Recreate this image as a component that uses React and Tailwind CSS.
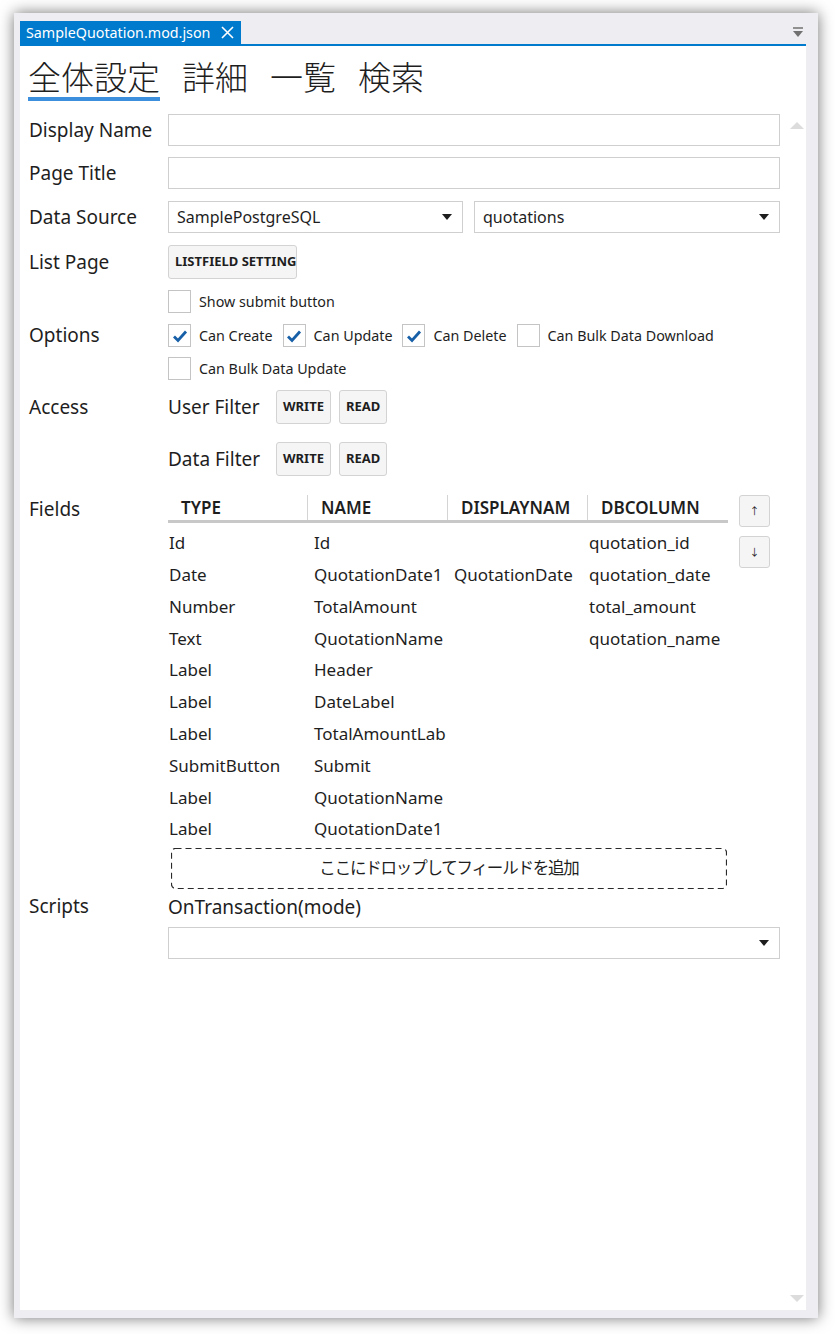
import React from 'react';

const FONT = { fontFamily: '"Noto Sans", "Noto Sans CJK JP", sans-serif' };

const Check = ({ checked, label }) => (
  <div className="flex items-center h-[23px]">
    <div className="w-[23px] h-[23px] border border-[#c4c4c4] bg-white flex items-center justify-center">
      {checked && (
        <svg width="16" height="14" viewBox="0 0 16 14">
          <path d="M2 7.5 L6 11.5 L14 2.5" fill="none" stroke="#1760a8" strokeWidth="2.8" />
        </svg>
      )}
    </div>
    <span className="ml-[8px] text-[14.3px] leading-[23px] text-[#1e1e1e]">{label}</span>
  </div>
);

const SmallButton = ({ children, className = '' }) => (
  <button className={`h-[34px] px-[6px] border border-[#d3d3d3] rounded-[3px] bg-[#f5f5f5] text-[13px] font-bold text-[#1e1e1e] whitespace-nowrap ${className}`}>
    {children}
  </button>
);

const Combo = ({ value, className = '' }) => (
  <div className={`h-[32px] border border-[#cfcfcf] bg-white flex items-center justify-between pl-[8px] pr-[10px] ${className}`}>
    <span className="text-[16px] text-[#1e1e1e]">{value}</span>
    <svg width="10" height="6" viewBox="0 0 10 6"><path d="M0 0 L10 0 L5 6 Z" fill="#1e1e1e" /></svg>
  </div>
);

const Row = ({ label, children, className = '' }) => (
  <div className={`flex items-center ${className}`}>
    <div className="w-[140px] pl-[1px] text-[19px] leading-[23px] text-[#1e1e1e]">{label}</div>
    <div className="flex-1 flex">{children}</div>
  </div>
);

const fields = [
  ['Id', 'Id', '', 'quotation_id'],
  ['Date', 'QuotationDate1', 'QuotationDate', 'quotation_date'],
  ['Number', 'TotalAmount', '', 'total_amount'],
  ['Text', 'QuotationName', '', 'quotation_name'],
  ['Label', 'Header', '', ''],
  ['Label', 'DateLabel', '', ''],
  ['Label', 'TotalAmountLab', '', ''],
  ['SubmitButton', 'Submit', '', ''],
  ['Label', 'QuotationName', '', ''],
  ['Label', 'QuotationDate1', '', ''],
];

export default function App() {
  return (
    <div className="w-[835px] h-[1334px] bg-white pl-[14px] pt-[13px]" style={FONT}>
      <div className="w-[804px] h-[1305px] bg-[#eeeef2] shadow-[0_0_14px_rgba(0,0,0,0.55)] pl-[6px] pr-[12px] pt-[8px] pb-[8px] flex flex-col">
        {/* document tab strip */}
        <div className="flex items-end justify-between h-[23px]">
          <div className="h-[23px] w-[221px] bg-[#007acc] flex items-center pl-[6px] text-white">
            <span className="text-[14.3px] whitespace-nowrap">SampleQuotation.mod.json</span>
            <svg className="ml-[11px]" width="13" height="13" viewBox="0 0 13 13">
              <path d="M1 1 L12 12 M12 1 L1 12" stroke="white" strokeWidth="1.6" />
            </svg>
          </div>
          <svg className="mb-[6px] mr-[2px]" width="12" height="11" viewBox="0 0 12 11">
            <path d="M1 1 H11" stroke="#717171" strokeWidth="1.5" />
            <path d="M1 4 H11 L6 10 Z" fill="#717171" />
          </svg>
        </div>
        <div className="h-[2px] bg-[#007acc]" />
        {/* content */}
        <div className="flex-1 bg-white flex">
          <div className="flex-1 pl-[8px]">
            {/* page tabs */}
            <div className="flex items-end gap-[22px] h-[55px] text-[33px] font-light text-[#1e1e1e]" style={{ fontFamily: '"Noto Sans CJK JP", sans-serif' }}>
              <div className="flex flex-col">
                <span className="leading-[40px]">全体設定</span>
                <div className="h-[4px] bg-[#3c8fdc] mt-[1px]" />
              </div>
              <span className="leading-[40px] mb-[5px]">詳細</span>
              <span className="leading-[40px] mb-[5px]">一覧</span>
              <span className="leading-[40px] mb-[5px]">検索</span>
            </div>

            <Row label="Display Name" className="mt-[13px]">
              <div className="h-[32px] w-[612px] border border-[#cfcfcf]" />
            </Row>
            <Row label="Page Title" className="mt-[11px]">
              <div className="h-[32px] w-[612px] border border-[#cfcfcf]" />
            </Row>
            <Row label="Data Source" className="mt-[12px]">
              <div className="flex gap-[11px] w-[612px]">
                <Combo value="SamplePostgreSQL" className="w-[295px]" />
                <Combo value="quotations" className="w-[306px]" />
              </div>
            </Row>
            <Row label="List Page" className="mt-[12px]">
              <SmallButton className="w-[129px] h-[33px] px-0 text-[12px]">LISTFIELD SETTING</SmallButton>
            </Row>
            <div className="pl-[140px] mt-[11px] flex">
              <Check label="Show submit button" />
            </div>
            <Row label="Options" className="mt-[11px]">
              <div className="flex gap-[10px]">
                <Check checked label="Can Create" />
                <Check checked label="Can Update" />
                <Check checked label="Can Delete" />
                <Check label="Can Bulk Data Download" />
              </div>
            </Row>
            <div className="pl-[140px] mt-[10px] flex">
              <Check label="Can Bulk Data Update" />
            </div>
            <Row label="Access" className="mt-[10px]">
              <div className="flex items-center">
                <span className="w-[108px] text-[19px] text-[#1e1e1e]">User Filter</span>
                <SmallButton>WRITE</SmallButton>
                <SmallButton className="ml-[8px]">READ</SmallButton>
              </div>
            </Row>
            <Row label="" className="mt-[18px]">
              <div className="flex items-center">
                <span className="w-[108px] text-[19px] text-[#1e1e1e]">Data Filter</span>
                <SmallButton>WRITE</SmallButton>
                <SmallButton className="ml-[8px]">READ</SmallButton>
              </div>
            </Row>

            {/* fields */}
            <div className="flex mt-[19px]">
              <div className="w-[140px] pl-[1px] text-[19px] text-[#1e1e1e] h-[28px] flex items-center">Fields</div>
              <div className="flex-1 flex">
                <div className="w-[560px]">
                  <div className="flex h-[28px] border-b-[3px] border-[#c8c8c8] text-[17px] font-semibold text-[#1e1e1e]">
                    {['TYPE', 'NAME', 'DISPLAYNAM', 'DBCOLUMN'].map((h, i) => (
                      <div key={h} className={`w-[140px] pl-[13px] flex items-center ${i < 3 ? 'border-r border-[#d4d4d4]' : ''}`}>{h}</div>
                    ))}
                  </div>
                  <div className="mt-[4px]">
                    {fields.map((f, i) => (
                      <div key={i} className="flex h-[31.8px] items-center text-[17px] text-[#1e1e1e] whitespace-nowrap">
                        <div className="w-[146px] pl-[1px]">{f[0]}</div>
                        <div className="w-[140px]">{f[1]}</div>
                        <div className="w-[135px]">{f[2]}</div>
                        <div className="w-[139px]">{f[3]}</div>
                      </div>
                    ))}
                  </div>
                  <div className="relative ml-[3px] mt-[3px] w-[556px] h-[41px] flex items-center justify-center text-[16.5px] tracking-[-1.2px] text-[#1e1e1e]">
                    <svg className="absolute inset-0" width="556" height="41" viewBox="0 0 556 41">
                      <rect x="0.5" y="0.5" width="555" height="40" rx="4" fill="none" stroke="#2a2a2a" strokeWidth="1.2" strokeDasharray="6 4" />
                    </svg>
                    <span className="relative">ここにドロップしてフィールドを追加</span>
                  </div>
                </div>
                <div className="ml-[11px] flex flex-col gap-[9px]">
                  <button className="w-[31px] h-[32px] border border-[#d3d3d3] rounded-[3px] bg-[#f5f5f5] text-[10px] text-[#222]">↑</button>
                  <button className="w-[31px] h-[32px] border border-[#d3d3d3] rounded-[3px] bg-[#f5f5f5] text-[10px] text-[#222]">↓</button>
                </div>
              </div>
            </div>

            <Row label="Scripts" className="mt-[6px]">
              <div className="text-[19px] text-[#1e1e1e] leading-[24px]">OnTransaction(mode)</div>
            </Row>
            <div className="pl-[140px] mt-[8px] flex">
              <Combo value="" className="w-[612px]" />
            </div>
          </div>
          {/* scrollbar */}
          <div className="w-[18px] flex flex-col justify-between items-center pt-[76px] pb-[8px]">
            <svg width="14" height="7" viewBox="0 0 14 7"><path d="M0 7 L14 7 L7 0 Z" fill="#dcdcdc" /></svg>
            <svg width="14" height="7" viewBox="0 0 14 7"><path d="M0 0 L14 0 L7 7 Z" fill="#dcdcdc" /></svg>
          </div>
        </div>
      </div>
    </div>
  );
}
